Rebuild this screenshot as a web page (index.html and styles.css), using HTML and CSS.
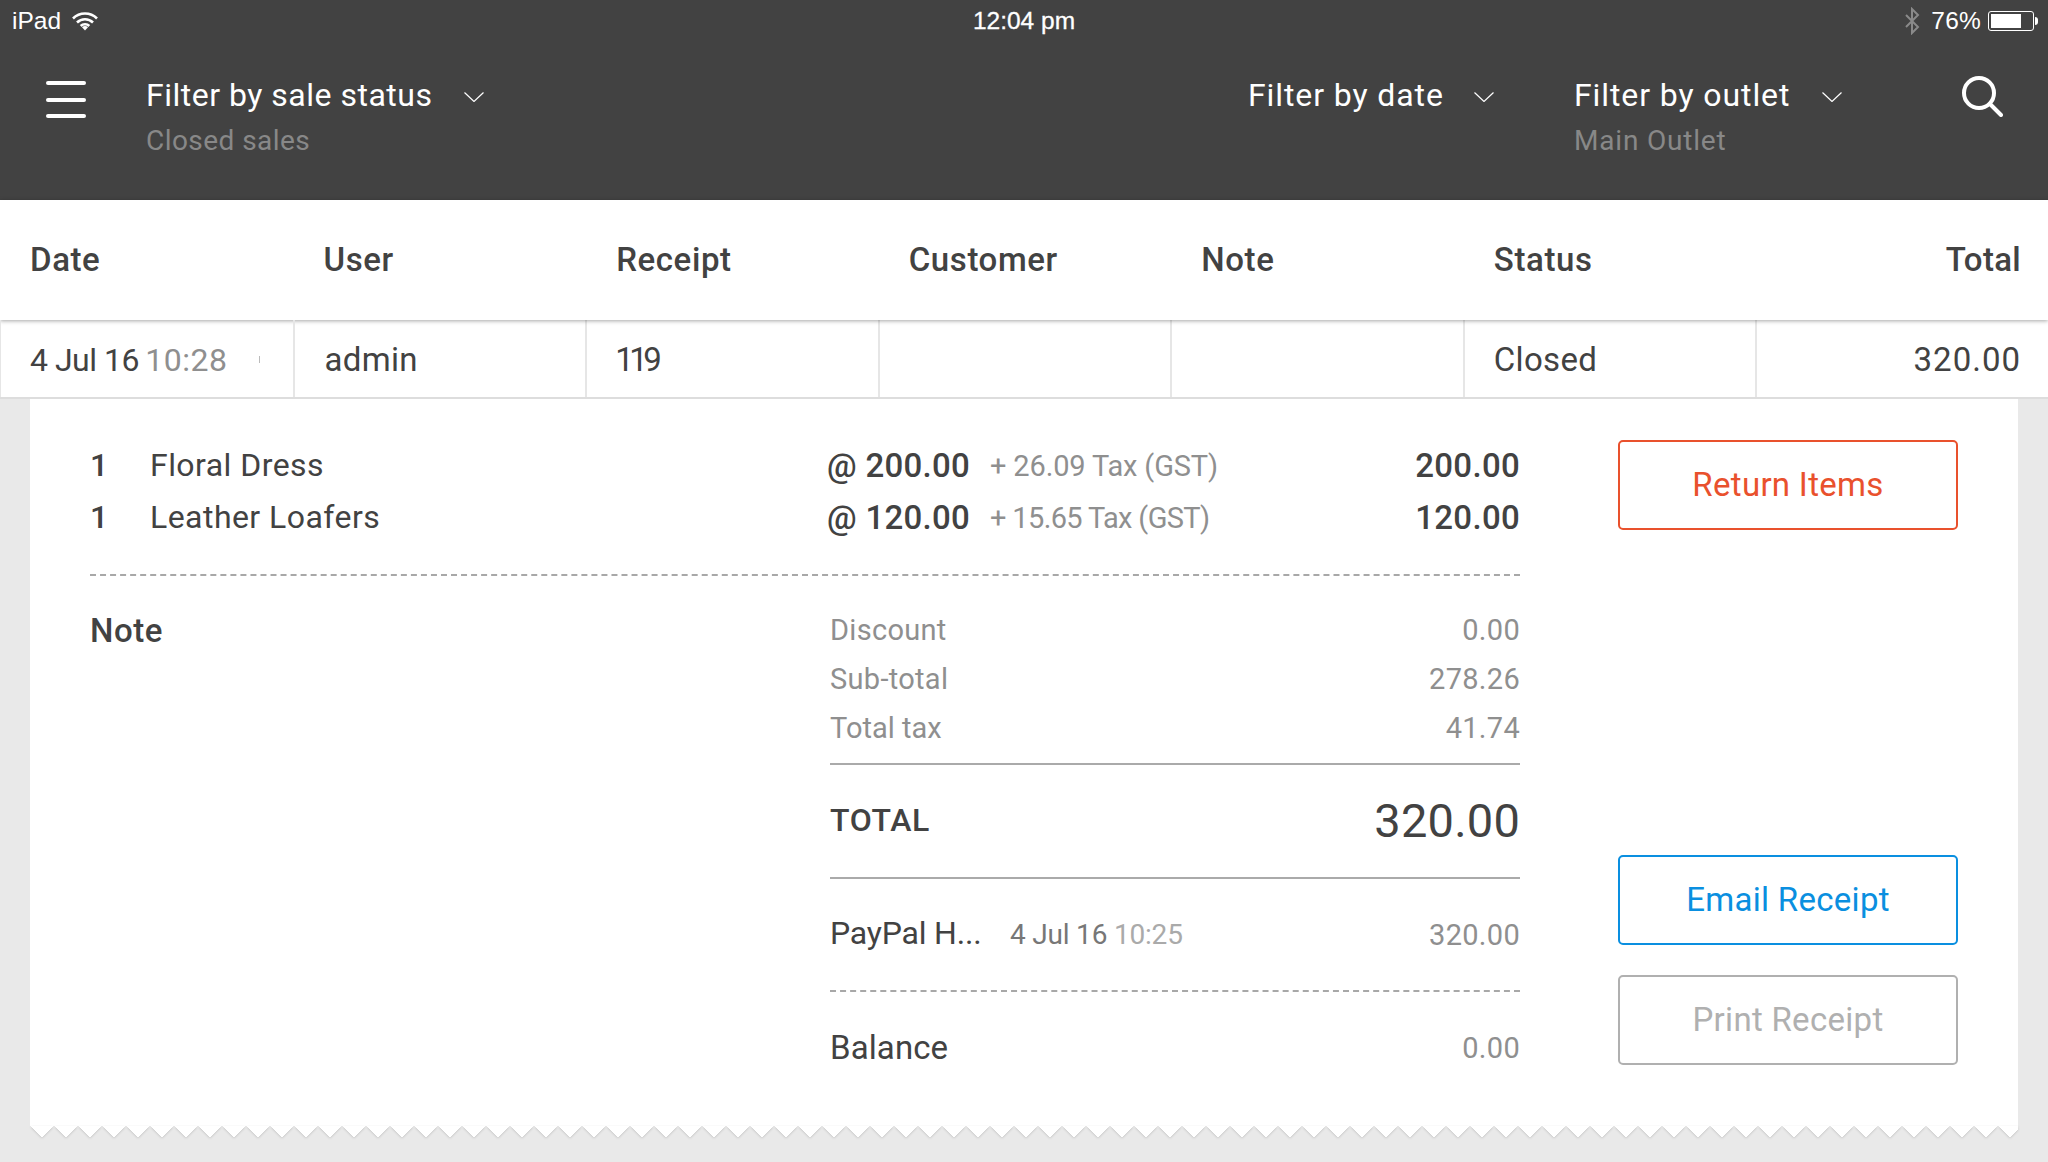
FILE: index.html
```html
<!DOCTYPE html>
<html lang="en">
<head>
<meta charset="utf-8">
<title>Sales history</title>
<link rel="stylesheet" href="styles.css">
</head>
<body>
<header class="topbar">
  <div class="status">
    <div class="status-left">
      <span>iPad</span>
      <svg class="wifi" viewBox="0 0 26 20" width="26" height="20"><path d="M1 7.500a17 17 0 0 1 24 0M5 11.500a11.500 11.500 0 0 1 16 0M8.700 15a6 6 0 0 1 8.600 0" fill="none" stroke="#fff" stroke-width="2.600"/><path d="M13 19.500l-3-3.300a4.200 4.200 0 0 1 6 0z" fill="#fff"/></svg>
    </div>
    <div class="status-time">12:04 pm</div>
    <div class="status-right">
      <svg class="bt" viewBox="0 0 16 28" width="16" height="28"><path d="M2 8l12 12-6 6V2l6 6L2 20" fill="none" stroke="#8a8a8a" stroke-width="2"/></svg>
      <span>76%</span>
      <span class="battery"><span class="battery-fill"></span></span>
      <span class="battery-tip"></span>
    </div>
  </div>
  <div class="toolbar">
    <button class="menu" aria-label="Menu"><span></span><span></span><span></span></button>
    <div class="filter filter-status">
      <div class="filter-title">Filter by sale status <svg class="chev" viewBox="0 0 20 10" width="20" height="10"><path d="M.5.500L10 9.500 19.500.500" fill="none" stroke="#fff" stroke-width="1.200"/></svg></div>
      <div class="filter-value">Closed sales</div>
    </div>
    <div class="filter filter-date">
      <div class="filter-title">Filter by date <svg class="chev" viewBox="0 0 20 10" width="20" height="10"><path d="M.5.500L10 9.500 19.500.500" fill="none" stroke="#fff" stroke-width="1.200"/></svg></div>
    </div>
    <div class="filter filter-outlet">
      <div class="filter-title">Filter by outlet <svg class="chev" viewBox="0 0 20 10" width="20" height="10"><path d="M.5.500L10 9.500 19.500.500" fill="none" stroke="#fff" stroke-width="1.200"/></svg></div>
      <div class="filter-value">Main Outlet</div>
    </div>
    <svg class="search" viewBox="0 0 42 42" width="42" height="42"><circle cx="18" cy="18" r="15" fill="none" stroke="#fff" stroke-width="4"/><path d="M29 29l11 11" stroke="#fff" stroke-width="4" stroke-linecap="round"/></svg>
  </div>
</header>

<div class="thead grid-cols">
  <div>Date</div><div>User</div><div>Receipt</div><div>Customer</div><div>Note</div><div>Status</div><div class="num">Total</div>
</div>
<div class="trow grid-cols">
  <div class="cell cell-date">4 Jul 16 <span class="muted">10:28</span><i class="tick"></i></div>
  <div class="cell">admin</div>
  <div class="cell cell-receipt">119</div>
  <div class="cell"></div>
  <div class="cell"></div>
  <div class="cell cell-status">Closed</div>
  <div class="cell num cell-total">320.00</div>
</div>

<main class="receipt">
  <div class="receipt-body">
    <section class="details">
      <div class="lines">
        <div class="line">
          <b class="qty">1</b><span class="name">Floral Dress</span>
          <b class="price">@ 200.00</b><span class="tax">+ 26.09 Tax (GST)</span><b class="line-total">200.00</b>
        </div>
        <div class="line">
          <b class="qty">1</b><span class="name">Leather Loafers</span>
          <b class="price">@ 120.00</b><span class="tax tax-narrow">+ 15.65 Tax (GST)</span><b class="line-total">120.00</b>
        </div>
      </div>
      <div class="lower">
        <div class="note">Note</div>
        <div class="summary">
          <div class="sum-rows">
            <div class="sum-row"><span>Discount</span><span>0.00</span></div>
            <div class="sum-row"><span>Sub-total</span><span>278.26</span></div>
            <div class="sum-row"><span>Total tax</span><span>41.74</span></div>
          </div>
          <div class="total"><b>TOTAL</b><span>320.00</span></div>
          <div class="payment"><span class="pay-name">PayPal H...</span><span class="pay-date">4 Jul 16 <span class="lighter">10:25</span></span><span class="pay-amt">320.00</span></div>
          <div class="balance"><span class="bal-name">Balance</span><span class="pay-amt">0.00</span></div>
        </div>
      </div>
    </section>
    <aside class="actions">
      <button class="btn btn-return">Return Items</button>
      <div class="actions-bottom">
        <button class="btn btn-email">Email Receipt</button>
        <button class="btn btn-print">Print Receipt</button>
      </div>
    </aside>
  </div>
</main>
<div class="zigzag"></div>
</body>
</html>
```

FILE: styles.css
```css
* { box-sizing: border-box; }
html, body { margin: 0; height: 1162px; overflow: hidden; }
body { background: #e9e9e9; font-family: Roboto, "Liberation Sans", sans-serif; color: #424242; font-size: 32px; letter-spacing: .45px; }

.topbar { height: 200px; background: #424242; color: #fff; }
.status { position: relative; display: flex; justify-content: space-between; align-items: center; height: 41px; padding: 0 10px 0 12px; font: 24.500px "Liberation Sans", sans-serif; letter-spacing: 0; }
.status-left { display: flex; align-items: center; gap: 11px; }
.status-time { position: absolute; left: 0; right: 0; text-align: center; -webkit-text-stroke: .3px #fff; }
.status-right { display: flex; align-items: center; letter-spacing: .2px; }
.bt { margin-right: 11px; }
.battery { display: block; margin-left: 7px; width: 46px; height: 20px; border: 1px solid #fff; border-radius: 3px; padding: 2px; }
.battery-fill { display: block; width: 76%; height: 100%; background: #fff; }
.battery-tip { width: 3px; height: 8px; background: #fff; border-radius: 0 3px 3px 0; margin-left: 1px; }

.toolbar { display: flex; align-items: flex-start; padding-top: 38px; }
.menu { width: 40px; height: 37px; margin: 2px 0 0 46px; padding: 0; border: 0; background: none; display: flex; flex-direction: column; justify-content: space-between; }
.menu span { display: block; height: 4px; border-radius: 2px; background: #fff; }
.filter-title { font-size: 32px; line-height: 32px; white-space: nowrap; display: flex; align-items: center; gap: 32px; }
.filter-value { font-size: 28px; line-height: 32px; margin-top: 14px; color: #888; }
.chev { margin-top: 3px; }
.filter-status { margin-left: 60px; width: 1102px; }
.filter-status .filter-title { letter-spacing: .5px; }
.filter-date { width: 326px; }
.filter-date .filter-title, .filter-outlet .filter-title { letter-spacing: .9px; }
.filter-date .chev { margin-left: -2px; }
.filter-outlet { width: 388px; }
.filter-outlet .filter-value { letter-spacing: .8px; }
.search { margin-top: -4px; margin-left: -1px; }

.grid-cols { display: grid; grid-template-columns: repeat(7, 1fr); }
.thead { height: 120px; align-items: center; background: #fff; font-size: 33px; font-weight: 500; letter-spacing: .6px; position: relative; box-shadow: 0 1px 4px rgba(0,0,0,.35); }
.thead > div { padding: 0 27px 2px 31px; }
.thead > div:first-child { padding-left: 30px; }
.thead > .num { letter-spacing: .3px; }
.num { text-align: right; }
.trow { height: 79px; background: #fff; border-bottom: 2px solid #ddd; font-size: 33px; letter-spacing: .3px; }
.cell { padding: 0 27px 0 30px; line-height: 80px; height: 77px; border-left: 2px solid #e6e6e6; white-space: nowrap; }
.cell:first-child { border-left: 1px solid #e6e6e6; padding-left: 29px; }
.cell-date { border-right: 2px solid #e6e6e6; position: relative; margin-right: -2px; font-size: 32px; letter-spacing: -.5px; }
.cell-date .muted { letter-spacing: .5px; margin-left: -1px; }
.cell-receipt { letter-spacing: -4.500px; padding-left: 28px; }
.cell-status { padding-left: 29px; }
.cell-total { letter-spacing: 1px; }
.tick { position: absolute; right: 33px; top: 36px; width: 1px; height: 7px; background: #bbb; }
.muted { color: #8f8f8f; }

.receipt { margin: 0 30px; background: #fff; height: 727px; padding: 40px 60px 0 60px; }
.receipt-body { display: flex; }
.details { width: 1430px; }
.line { display: grid; grid-template-columns: 60px 677px 163px 1fr auto; height: 52px; align-items: center; }
.lines { padding-bottom: 31px; border-bottom: 2px dashed #a8a8a8; }
b { font-weight: 500; font-size: 33px; letter-spacing: .3px; }
.qty { font-size: 32px; }
.tax { color: #8f8f8f; font-size: 29px; letter-spacing: -.15px; padding-top: 2px; }
.tax-narrow { letter-spacing: -.65px; }
.lower { display: flex; padding-top: 29px; }
.note { width: 738px; font-size: 33px; font-weight: 500; letter-spacing: .5px; padding-top: 6px; margin-right: 2px; }
.summary { flex: 1; color: #8f8f8f; font-size: 29px; letter-spacing: .3px; }
.sum-row { display: flex; justify-content: space-between; height: 49px; align-items: center; }
.sum-row:last-child > span:first-child { letter-spacing: 0; }
.sum-rows { padding-bottom: 11px; border-bottom: 2px solid #aaa; }
.total { display: flex; justify-content: space-between; align-items: center; height: 114px; border-bottom: 2px solid #aaa; color: #424242; padding-bottom: 2px; }
.total b { font-size: 32px; letter-spacing: .6px; }
.total span { font-size: 47px; letter-spacing: .2px; }
.payment { display: flex; align-items: center; height: 113px; border-bottom: 2px dashed #a8a8a8; }
.pay-name { color: #424242; font-size: 32px; width: 180px; padding-bottom: 3px; letter-spacing: -.2px; }
.pay-date { flex: 1; font-size: 28px; color: #777; letter-spacing: -.2px; }
.lighter { color: #aaa; }
.balance { display: flex; justify-content: space-between; align-items: center; height: 112px; }
.bal-name { color: #424242; font-size: 33px; letter-spacing: .1px; padding-bottom: 2px; }

.actions { margin-left: 98px; width: 340px; display: flex; flex-direction: column; }
.btn { display: block; width: 100%; height: 90px; padding-bottom: 3px; background: #fff; border: 2px solid; border-radius: 5px; font: inherit; font-size: 33px; letter-spacing: .3px; }
.btn-return { margin-top: 1px; color: #e9512d; border-color: #e9512d; }
.actions-bottom { margin-top: 325px; display: flex; flex-direction: column; gap: 30px; }
.btn-email { color: #0a8fe0; border-color: #0a8fe0; }
.btn-print { color: #b0b0b0; border-color: #b0b0b0; }

.zigzag { margin: 0 30px; height: 12px; background-image: linear-gradient(135deg, #fff 25%, transparent 25%), linear-gradient(225deg, #fff 25%, transparent 25%); background-size: 24px 24px; background-position: 12px 0; background-repeat: repeat-x; filter: drop-shadow(0 1px 1px #c8c8c8); }
```
